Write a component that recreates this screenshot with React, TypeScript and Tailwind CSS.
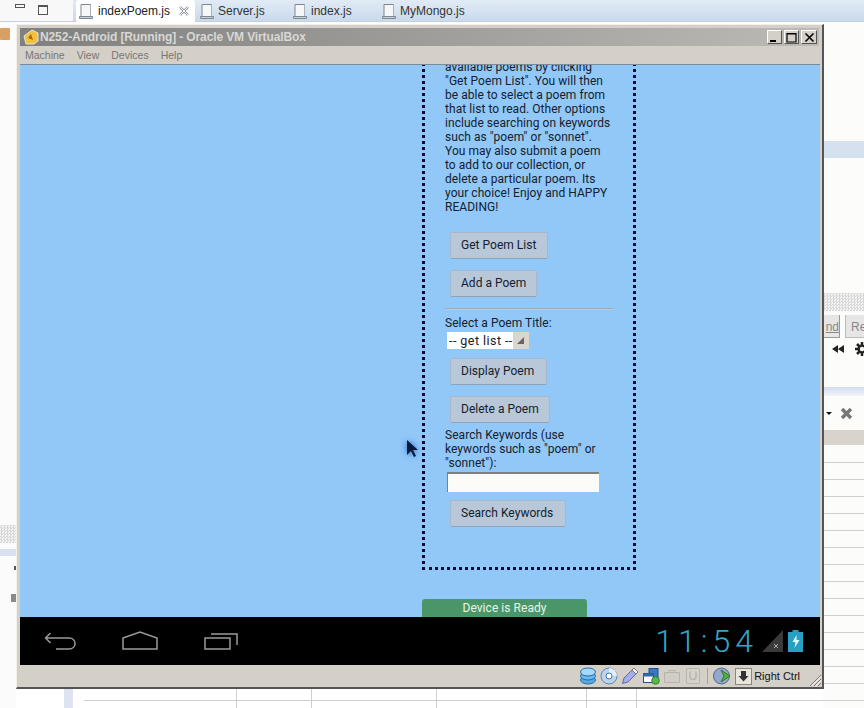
const ui = { fontFamily: '"Liberation Sans", Arial, sans-serif' };

const gridRows = Array.from({ length: 15 }, (_, i) => i);

function FileIcon() {
  return (
    <svg width="16" height="17" viewBox="0 0 16 17" className="shrink-0">
      <path d="M3 1.500h9.500v12H3z" fill="#f4f6f8" stroke="#7c8791" />
      <path d="M1.500 13.500h13v2h-13z" fill="#c9d1d8" stroke="#7c8791" />
      <path d="M12.500 2v11" stroke="#aab3bb" />
    </svg>
  );
}

function Tab({ label, active, w }: { label: string; active?: boolean; w: number }) {
  return (
    <div
      className={active ? "flex h-[22px] items-center gap-[4px] rounded-t-[3px] bg-white pl-[2px] text-[12px] text-[#222]" : "flex h-[22px] items-center gap-[3px] pl-[4px] text-[12px] text-[#333]"}
      style={{ width: w }}
    >
      <FileIcon />
      <span>{label}</span>
      {active && (
        <svg width="12" height="12" viewBox="0 0 12 12" className="ml-[4px]">
          <path d="M2 2l8 8M10 2l-8 8" stroke="#8a8f96" strokeWidth="2.400" fill="none" />
          <path d="M2 2l8 8M10 2l-8 8" stroke="#fff" strokeWidth="1" fill="none" />
        </svg>
      )}
    </div>
  );
}

function WinBtn({ kind }: { kind: "min" | "max" | "close" }) {
  return (
    <div className={(kind === "close" ? "w-[16px]" : "w-[15px]") + " flex h-[14px] items-center justify-center border border-t-white border-r-[#555] border-b-[#555] border-l-white bg-[#d4d0c8]"}>
      <svg width="11" height="11" viewBox="0 0 11 11">
        {kind === "min" && <path d="M1 9h6" stroke="#000" strokeWidth="2" />}
        {kind === "max" && <path d="M1 1.500h9v8.500H1zM1 2h9" stroke="#000" fill="none" strokeWidth="1.200" />}
        {kind === "close" && <path d="M1.500 1.500l8 8M9.500 1.500l-8 8" stroke="#000" strokeWidth="1.600" />}
      </svg>
    </div>
  );
}

function PoemButton({ label, w, className }: { label: string; w: number; className: string }) {
  return (
    <div
      className={"ml-[5px] flex h-[27px] items-center rounded-[2px] border border-[#a6b8ca] border-b-[#8ea3b8] bg-[#b8c8d9] pb-[2px] pl-[10px] text-[12px] tracking-[0.02px] text-[#14202c] " + className}
      style={{ width: w }}
    >
      {label}
    </div>
  );
}

function StatusIcons() {
  return (
    <div className="flex items-center gap-[3px]">
      <svg width="18" height="18" viewBox="0 0 18 18">
        <ellipse cx="9" cy="13" rx="7.500" ry="4" fill="#57a9e4" stroke="#256ea8" />
        <ellipse cx="9" cy="9" rx="7.500" ry="4" fill="#6db8ec" stroke="#256ea8" />
        <ellipse cx="9" cy="5" rx="7.500" ry="4" fill="#a6d8f7" stroke="#256ea8" />
      </svg>
      <svg width="18" height="18" viewBox="0 0 18 18">
        <circle cx="9" cy="9" r="8" fill="#bcd3ef" stroke="#6a87a8" />
        <path d="M9 1a8 8 0 0 1 8 8H9z" fill="#e4eefa" />
        <circle cx="9" cy="9" r="3" fill="#fff" stroke="#3f74b0" />
      </svg>
      <svg width="18" height="18" viewBox="0 0 18 18">
        <path d="M1.500 16.500l1.500-5.500 8-8 4 4-8 8z" fill="#a3aeea" stroke="#5f6aa8" />
        <path d="M11 3l2-2 4 4-2 2z" fill="#f2f2f2" stroke="#777" />
      </svg>
      <svg width="18" height="18" viewBox="0 0 18 18">
        <rect x="7" y="1.500" width="9" height="9" fill="#3a78c2" stroke="#1e4f8c" />
        <rect x="1.500" y="6.500" width="10" height="9" fill="#fff" stroke="#1e4f8c" />
        <rect x="1.500" y="6.500" width="10" height="3" fill="#2e69b0" />
        <circle cx="13.500" cy="13.500" r="3.800" fill="#58b948" stroke="#2f8a28" />
      </svg>
      <svg width="18" height="18" viewBox="0 0 18 18" opacity="0.6">
        <path d="M1.500 5.500h15v10h-15z" fill="#cfccc5" stroke="#a5a29b" />
        <path d="M6 5.500V3.500h6v2" fill="none" stroke="#a5a29b" />
      </svg>
      <svg width="18" height="18" viewBox="0 0 18 18" opacity="0.6">
        <rect x="2.500" y="1.500" width="13" height="15" rx="1.500" fill="#d8d5ce" stroke="#a5a29b" />
        <path d="M6 4.500v5a3 3 0 0 0 6 0v-5" fill="none" stroke="#a5a29b" strokeWidth="1.500" />
      </svg>
      <div className="mx-[2px] h-[16px] w-px bg-[#a8a49b]" />
      <svg width="19" height="18" viewBox="0 0 19 18">
        <circle cx="8.500" cy="9" r="8" fill="#93a9cc" stroke="#52688a" />
        <path d="M8 3l9 6-9 6 3-6z" fill="#55b03e" stroke="#327a22" />
      </svg>
      <svg width="17" height="17" viewBox="0 0 17 17">
        <rect x="0.500" y="0.500" width="16" height="16" fill="#e8e5dc" stroke="#8a877f" />
        <path d="M6 3h5v5h2.500l-5 5.500-5-5.500H6z" fill="#333" />
      </svg>
    </div>
  );
}

export default function App() {
  return (
    <div className="relative h-[708px] w-[864px] overflow-hidden bg-white" style={ui}>
      {/* IDE behind the window */}
      <div className="flex h-full flex-col">
        <div className="flex h-[22px] shrink-0 border-b border-[#c4d0de] bg-gradient-to-b from-[#e2ebf5] to-[#c9daed]">
          <div className="flex h-[21px] w-[73px] items-start gap-[13px] bg-[#f8f8f8] pt-[4px] pl-[15px]">
            <div className="h-[4px] w-[10px] border border-[#555]" />
            <div className="mt-[1px] h-[10px] w-[10px] border border-t-2 border-[#555]" />
          </div>
          <div className="w-[3px]" />
          <Tab label="indexPoem.js" active w={119} />
          <Tab label="Server.js" w={93} />
          <Tab label="index.js" w={89} />
          <Tab label="MyMongo.js" w={120} />
        </div>
        <div className="flex min-h-0 flex-1">
          <div className="flex w-[16px] shrink-0 flex-col bg-[#fbfbfb]">
            <div className="mt-[6px] h-[12px] w-[10px] rounded-[1px] bg-[#d9a066]" />
            <div className="mt-[485px] h-[18px] bg-[repeating-conic-gradient(#d8d8d8_0_25%,#f4f4f4_0_50%)] bg-[length:3px_3px]" />
            <div className="mt-[6px] h-[7px] bg-[#d9e1f0]" />
            <div className="mt-[10px] ml-auto h-[4px] w-[2px] bg-[#555]" />
            <div className="mt-[24px] ml-auto h-[8px] w-[5px] bg-[#8a8a8a]" />
          </div>
          <div className="flex flex-1 flex-col justify-end">
            <div className="flex h-[19px] items-stretch pl-[48px]">
              <div className="mr-[11px] w-[9px] bg-[#dde3f3]" />
              <div className="w-[153px] border-r border-[#cfcfcf]"><div className="mt-[11px] border-t border-[#cfcfcf]" /></div>
              <div className="w-[75px] border-r border-[#cfcfcf]"><div className="mt-[11px] border-t border-[#cfcfcf]" /></div>
              <div className="w-[125px] border-r border-[#cfcfcf]"><div className="mt-[11px] border-t border-[#cfcfcf]" /></div>
              <div className="w-[150px] border-r border-[#cfcfcf]"><div className="mt-[11px] border-t border-[#cfcfcf]" /></div>
              <div className="w-[50px] border-r border-[#cfcfcf]"><div className="mt-[11px] border-t border-[#cfcfcf]" /></div>
              <div className="flex-1"><div className="mt-[11px] border-t border-[#cfcfcf]" /></div>
            </div>
          </div>
          <div className="flex w-[41px] shrink-0 flex-col overflow-hidden bg-[#fcfcfa] text-[12px]">
            <div className="mt-[119px] h-[17px] bg-[#d6e1f0]" />
            <div className="mt-[135px] h-[18px] bg-[repeating-conic-gradient(#d8d8d8_0_25%,#f4f4f4_0_50%)] bg-[length:3px_3px]" />
            <div className="mt-[4px] flex h-[23px] gap-[5px]">
              <div className="w-[17px] overflow-hidden border-r border-b border-[#999] bg-[#e6e6e6] pt-[3px] text-right text-[#888] underline">nd</div>
              <div className="flex-1 overflow-hidden border-b border-l border-[#bbb] bg-[#e6e6e6] pt-[3px] pl-[5px] text-[#888]">Re</div>
            </div>
            <div className="mt-[3px] flex h-[16px] items-center pl-[9px]">
              <svg width="40" height="16" viewBox="0 0 40 16" className="shrink-0">
                <path d="M0 8l6-4v8zM6 8l6-4v8z" fill="#222" />
                <path d="M30 1v14M23 8h14M25 3l10 10M35 3L25 13" stroke="#222" strokeWidth="2.500" />
                <circle cx="30" cy="8" r="4.500" fill="#222" />
                <circle cx="30" cy="8" r="2.200" fill="#fcfcfa" />
              </svg>
            </div>
            <div className="mt-[30px] h-[9px] bg-gradient-to-b from-[#d3dcef] to-[#f1f4fa]" />
            <div className="flex h-[34px] items-center gap-[8px] pl-[3px]">
              <div className="h-0 w-0 border-x-[3px] border-t-[3px] border-x-transparent border-t-[#111]" />
              <svg width="13" height="13" viewBox="0 0 13 13">
                <path d="M2 2l9 9M11 2l-9 9" stroke="#777" strokeWidth="3.400" />
              </svg>
            </div>
            <div className="h-[15px] bg-[#d8d4cc]" />
            <div className="mt-[1px] flex flex-col">
              {gridRows.map((i) => (
                <div key={i} className="h-[17px] border-b border-[#cfcfcf]" />
              ))}
            </div>
          </div>
        </div>
      </div>

      {/* VirtualBox window */}
      <div className="absolute top-[24px] left-[16px] flex h-[665px] w-[808px] flex-col border-t border-r-2 border-b-2 border-l border-[#555] border-t-[#f2f0ea] border-l-[#f2f0ea] bg-[#d4d0c8] pt-[3px]">
        <div className="mx-[3px] flex h-[18px] shrink-0 items-center bg-gradient-to-r from-[#808080] to-[#bcbab4] pr-[2px] pl-[3px] text-[12px] font-bold tracking-[-0.12px] text-[#d8d8d4]">
          <svg width="16" height="16" viewBox="0 0 16 16" className="mr-[1px] shrink-0">
            <path d="M1 7l8-6 6 3v8l-4 3H3z" fill="#f0c040" stroke="#efe6c8" />
            <path d="M5 9l3-4 2 6z" fill="#a06a10" />
          </svg>
          <span className="flex-1">N252-Android [Running] - Oracle VM VirtualBox</span>
          <div className="flex gap-[2px]">
            <WinBtn kind="min" />
            <WinBtn kind="max" />
            <WinBtn kind="close" />
          </div>
        </div>
        <div className="flex h-[18px] shrink-0 items-center gap-[12px] pt-[2px] pl-[8px] text-[10.500px] text-[#777]">
          <span>Machine</span>
          <span>View</span>
          <span>Devices</span>
          <span>Help</span>
        </div>
        <div className="relative ml-[3px] flex h-[553px] w-[800px] shrink-0 flex-col justify-end overflow-hidden border-t border-[#7a8a98] bg-[#92c8f8] text-[12px] leading-[14px] tracking-[0.05px] text-[#14202c]" style={{ fontFamily: 'Roboto, sans-serif' }}>
          <div className="ml-[402px] w-[214px] shrink-0 border-[3px] border-dotted border-[#0a0a33] pr-[20px] pb-[40px] pl-[20px]">
            <p className="whitespace-nowrap">
              available poems by clicking<br />
              "Get Poem List". You will then<br />
              be able to select a poem from<br />
              that list to read. Other options<br />
              include searching on keywords<br />
              such as "poem" or "sonnet".<br />
              You may also submit a poem<br />
              to add to our collection, or<br />
              delete a particular poem. Its<br />
              your choice! Enjoy and HAPPY<br />
              READING!
            </p>
            <PoemButton label="Get Poem List" w={98} className="mt-[18px]" />
            <PoemButton label="Add a Poem" w={87} className="mt-[11px]" />
            <div className="mt-[11px] h-[2px] w-[168px] bg-gradient-to-b from-[#8d9aa6] to-[#c8dcee]" />
            <div className="mt-[6px]">Select a Poem Title:</div>
            <div className="mt-[2px] ml-[2px] flex h-[17px] w-[82px] items-center bg-white text-[12.500px] tracking-[0.45px]">
              <span className="flex-1 pl-[2px] whitespace-nowrap">-- get list --</span>
              <div className="flex h-full w-[17px] items-center justify-center bg-[#d8d6ce]">
                <svg width="9" height="9" viewBox="0 0 9 9">
                  <path d="M8 1v7H1z" fill="#666" />
                </svg>
              </div>
            </div>
            <PoemButton label="Display Poem" w={97} className="mt-[9px]" />
            <PoemButton label="Delete a Poem" w={100} className="mt-[11px]" />
            <p className="mt-[5px] whitespace-nowrap">
              Search Keywords (use<br />
              keywords such as "poem" or<br />
              "sonnet"):
            </p>
            <div className="mt-[2px] ml-[2px] h-[20px] w-[152px] border-t-2 border-l border-[#808080] bg-[#fbfbf8]" />
            <PoemButton label="Search Keywords" w={116} className="mt-[8px]" />
          </div>
          <div className="mt-[29px] ml-[402px] flex h-[18px] w-[165px] shrink-0 items-center justify-center rounded-t-[3px] bg-[#4a9668] text-[12px] text-[#e8f4e8]">Device is Ready</div>
          <svg width="14" height="20" viewBox="0 0 14 20" className="absolute top-[374px] left-[386px] drop-shadow-[0_0_3px_#1a6fd0]">
            <path d="M1 1v15l4-4 3 6 2-1-3-6h5z" fill="#0a1a3a" />
          </svg>
        </div>
        <div className="ml-[3px] flex h-[48px] w-[800px] shrink-0 items-center bg-black pl-[24px]">
          <svg width="33" height="20" viewBox="0 0 33 20" className="mr-[45px]">
            <path d="M6.500 2L1.500 7 6.500 12M2 7h23c8 0 8 11 0 11H12" fill="none" stroke="#9a9a9a" strokeWidth="1.500" />
          </svg>
          <svg width="36" height="20" viewBox="0 0 36 20" className="mr-[46px]">
            <path d="M1 7L18 1l17 6v11H1z" fill="none" stroke="#9a9a9a" strokeWidth="1.500" />
          </svg>
          <svg width="34" height="20" viewBox="0 0 34 20">
            <path d="M1 7h25v11H1zM7 3h26v11" fill="none" stroke="#9a9a9a" strokeWidth="1.500" />
          </svg>
          <div className="ml-auto flex items-center pr-[17px]">
            <span className="mr-[4px] text-[32px] leading-[40px] tracking-[5px] text-[#33a5c9]" style={{ fontFamily: 'Roboto, sans-serif', fontWeight: 300 }}>11:54</span>
            <svg width="21" height="22" viewBox="0 0 21 22" className="mr-[5px]">
              <path d="M21 0v22H0z" fill="#3a3a3a" />
              <path d="M12 14l4 4M16 14l-4 4" stroke="#aaa" strokeWidth="1" />
            </svg>
            <svg width="15" height="22" viewBox="0 0 15 22">
              <path d="M4.500 0h6v2H15v20H0V2h4.500z" fill="#2a9fc4" />
              <path d="M8.500 5l-4 7h3l-1 6 5-8h-3z" fill="#dff" />
            </svg>
          </div>
        </div>
        <div className="flex flex-1 items-center justify-end pr-[22px] text-[11px] text-[#111]">
          <StatusIcons />
          <span className="ml-[2px]">Right Ctrl</span>
        </div>
        <svg width="14" height="14" viewBox="0 0 14 14" className="absolute right-0 bottom-0">
          <path d="M13 2L2 13M13 6l-7 7M13 10l-3 3" stroke="#777" strokeWidth="1" />
          <path d="M13 3.500L3.500 13M13 7.500L7.500 13" stroke="#fff" strokeWidth="1" />
        </svg>
      </div>
    </div>
  );
}
